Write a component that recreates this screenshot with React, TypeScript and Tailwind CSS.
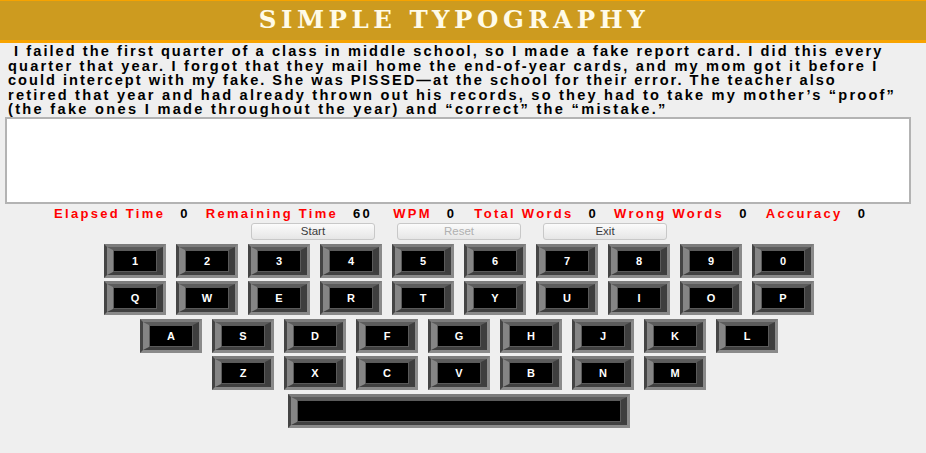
import React from "react";

const passageLines = [
  { text: "\u00a0I failed the first quarter of a class in middle school, so I made a fake report card. I did this every", cls: "tracking-[2.05px]" },
  { text: "quarter that year. I forgot that they mail home the end-of-year cards, and my mom got it before I", cls: "tracking-[2.16px]" },
  { text: "could intercept with my fake. She was PISSED\u2014at the school for their error. The teacher also", cls: "tracking-[2px]" },
  { text: "retired that year and had already thrown out his records, so they had to take my mother\u2019s \u201cproof\u201d", cls: "tracking-[2.2px]" },
  { text: "(the fake ones I made throughout the year) and \u201ccorrect\u201d the \u201cmistake.\u201d", cls: "tracking-[2.3px]" },
];

const rows = [
  ["1", "2", "3", "4", "5", "6", "7", "8", "9", "0"],
  ["Q", "W", "E", "R", "T", "Y", "U", "I", "O", "P"],
  ["A", "S", "D", "F", "G", "H", "J", "K", "L"],
  ["Z", "X", "C", "V", "B", "N", "M"],
];

const stats = [
  { label: "Elapsed Time", value: "0", gap: "mr-[16px]" },
  { label: "Remaining Time", value: "60", gap: "mr-[21px]" },
  { label: "WPM", value: "0", gap: "mr-[18px]" },
  { label: "Total Words", value: "0", gap: "mr-[16px]" },
  { label: "Wrong Words", value: "0", gap: "mr-[17px]" },
  { label: "Accuracy", value: "0", gap: "mr-[16px]" },
];

const Key = ({ label, wide }: { label: string; wide?: boolean }) => (
  <div
    className={`${wide ? "w-[342px]" : "w-[62px]"} h-[34px] border-t-[3px] border-l-[3px] border-r-[3px] border-b-[3px] border-t-[#7c7c7c] border-l-[#454545] border-r-[#8a8a8a] border-b-[#8a8a8a] flex`}>
    <div className="flex-1 flex border-t-[3px] border-l-[6px] border-r-[6px] border-b-[3px] border-t-[#5c5c5c] border-l-[#858585] border-r-[#3e3e3e] border-b-[#404040]">
      <div className="flex-1 bg-black border border-[#5a5a5a] flex items-center justify-center text-white text-[11px] font-bold">
        {label}
      </div>
    </div>
  </div>
);

const Button = ({ label, disabled }: { label: string; disabled?: boolean }) => (
  <div
    className={`w-[124px] h-[17px] rounded-[3px] border border-[#c8c8c8] bg-gradient-to-b from-[#fbfbfb] to-[#e6e6e6] flex items-center justify-center text-[11.5px] ${disabled ? "text-[#b0b0b0]" : "text-[#3a3a3a]"}`}>
    {label}
  </div>
);

export default function App() {
  return (
    <div
      className="w-[926px] h-[453px] bg-[#efefef] overflow-hidden"
      style={{ fontFamily: '"Liberation Sans", Arial, sans-serif' }}>
      <div className="h-[43px] bg-[#cd9b1f] border-t-[1.5px] border-b-[3px] border-[#f7a300] flex items-center justify-center">
        <h1
          className="text-[#fffbe8] text-[24.5px] font-bold tracking-[4.5px] leading-none pl-[4px] mr-[22px]"
          style={{ fontFamily: '"DejaVu Serif", serif' }}>
          SIMPLE TYPOGRAPHY
        </h1>
      </div>

      <div className="pl-[8px] pt-[1px] text-[14.6px] leading-[14.6px] font-bold text-black whitespace-nowrap">
        {passageLines.map((line, i) => (
          <p key={i} className={line.cls}>
            {line.text}
          </p>
        ))}
      </div>

      <div className="ml-[5px] w-[906px] h-[87px] bg-white border-2 border-[#b3b3b3]" />

      <div className="flex items-center pl-[54px] mt-[2px] h-[16px] text-[13px] font-bold tracking-[2.3px]">
        {stats.map((s) => (
          <div key={s.label} className={`flex items-center ${s.gap}`}>
            <span className="text-[#ff0000]">{s.label}</span>
            <span className="text-black ml-[15px]">{s.value}</span>
          </div>
        ))}
      </div>

      <div className="flex gap-[22px] pl-[251px] mt-[1px]">
        <Button label="Start" />
        <Button label="Reset" disabled />
        <Button label="Exit" />
      </div>

      <div className="w-[918px] flex flex-col items-center mt-[4px] gap-[3.5px]">
        {rows.map((row, i) => (
          <div key={i} className="flex gap-[10px]">
            {row.map((k) => (
              <Key key={k} label={k} />
            ))}
          </div>
        ))}
        <Key label="" wide />
      </div>
    </div>
  );
}
